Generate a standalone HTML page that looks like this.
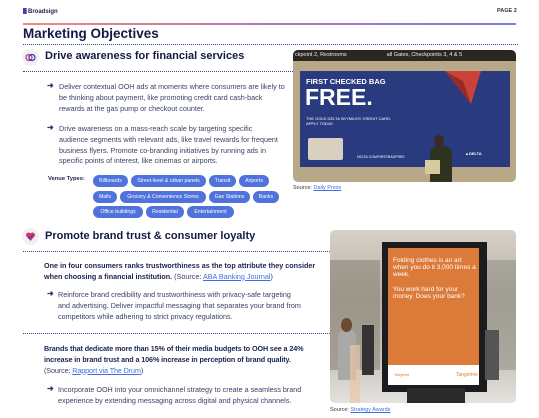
<!DOCTYPE html>
<html><head><meta charset="utf-8"><style>
*{margin:0;padding:0;box-sizing:border-box}
body{width:539px;height:418px;background:#fff;font-family:"Liberation Sans",sans-serif;color:#2b3060;position:relative;overflow:hidden}
.a{position:absolute}
.dot{position:absolute;height:0;border-top:1px dotted #3a4380}
.h{font-weight:bold;color:#141a45}
.t{font-size:7.2px;line-height:10.8px;color:#3a3f66}
.arr{position:absolute;font-size:8px;color:#2a3370;font-weight:bold}
.chip{position:absolute;height:12px;border-radius:6px;background:#4f72dc;color:#fff;font-size:5.2px;line-height:12px;text-align:center}
a{color:#3d6fe0;text-decoration:underline}
.ic{position:absolute;width:17px;height:17px;border-radius:50%;background:#f1f0f4}
</style></head><body>
<div class="a" style="left:23px;top:8px;font-size:6px;font-weight:bold;color:#1a2352"><span style="display:inline-block;width:4px;height:6px;background:#3b3fc9;border-right:1px solid #e85b6a;vertical-align:-1px;margin-right:1px"></span>Broadsign</div>
<div class="a" style="left:497px;top:8px;font-size:5.5px;font-weight:bold;color:#333">PAGE 2</div>
<div class="a" style="left:23px;top:23px;width:493px;height:2px;background:linear-gradient(90deg,#f08a7e,#b07ab0,#7a7fd8)"></div>
<div class="a h" style="left:23px;top:26px;font-size:13.5px">Marketing Objectives</div>
<div class="dot" style="left:23px;top:44px;width:495px"></div>
<div class="ic" style="left:22px;top:49px"><svg width="17" height="17"><circle cx="7" cy="8.5" r="3" fill="none" stroke="#d33a5e" stroke-width="1.3"/><circle cx="10" cy="8.5" r="3" fill="none" stroke="#3b3fc9" stroke-width="1.3"/></svg></div>
<div class="a h" style="left:45px;top:50px;font-size:11px">Drive awareness for financial services</div>
<div class="dot" style="left:23px;top:71px;width:270px"></div>
<div class="arr" style="left:47px;top:81px">➜</div>
<div class="a t" style="left:59px;top:82px;width:226px">Deliver contextual OOH ads at moments where consumers are likely to be thinking about payment, like promoting credit card cash-back rewards at the gas pump or checkout counter.</div>
<div class="arr" style="left:47px;top:123px">➜</div>
<div class="a t" style="left:59px;top:124px;width:222px">Drive awareness on a mass-reach scale by targeting specific audience segments with relevant ads, like travel rewards for frequent business flyers. Promote co-branding initiatives by running ads in specific points of interest, like cinemas or airports.</div>
<div class="a" style="left:48px;top:176px;font-size:5.8px;font-weight:bold;color:#1a2352">Venue Types:</div>
<div class="chip" style="left:93px;top:175px;width:35px">Billboards</div>
<div class="chip" style="left:131px;top:175px;width:75px">Street-level &amp; urban panels</div>
<div class="chip" style="left:209px;top:175px;width:27px">Transit</div>
<div class="chip" style="left:239px;top:175px;width:30px">Airports</div>
<div class="chip" style="left:93px;top:191px;width:24px">Malls</div>
<div class="chip" style="left:120px;top:191px;width:86px">Grocery &amp; Convenience Stores</div>
<div class="chip" style="left:209px;top:191px;width:41px">Gas Stations</div>
<div class="chip" style="left:253px;top:191px;width:26px">Banks</div>
<div class="chip" style="left:93px;top:206px;width:50px">Office buildings</div>
<div class="chip" style="left:146px;top:206px;width:38px">Residential</div>
<div class="chip" style="left:187px;top:206px;width:47px">Entertainment</div>
<div class="ic" style="left:22px;top:228px"><svg width="17" height="17"><path d="M8.5 13 L4.5 8.5 A2.3 2.3 0 0 1 8.5 5.5 A2.3 2.3 0 0 1 12.5 8.5Z" fill="#d33a5e"/><path d="M6 8.5 L8 10.5 L11 7" fill="none" stroke="#3b3fc9" stroke-width="1.2"/></svg></div>
<div class="a h" style="left:45px;top:230px;font-size:11px">Promote brand trust &amp; consumer loyalty</div>
<div class="dot" style="left:23px;top:251px;width:307px"></div>
<div class="a t" style="left:44px;top:261px;width:275px"><b style="color:#1a2352">One in four consumers ranks trustworthiness as the top attribute they consider when choosing a financial institution.</b> (Source: <a>ABA Banking Journal</a>)</div>
<div class="arr" style="left:47px;top:289px">➜</div>
<div class="a t" style="left:58px;top:290px;width:245px">Reinforce brand credibility and trustworthiness with privacy-safe targeting and advertising. Deliver impactful messaging that separates your brand from competitors while adhering to strict privacy regulations.</div>
<div class="dot" style="left:23px;top:333px;width:307px"></div>
<div class="a t" style="left:44px;top:344px;white-space:nowrap;letter-spacing:-0.1px"><b style="color:#1a2352">Brands that dedicate more than 15% of their media budgets to OOH see a 24%<br>increase in brand trust and a 106% increase in perception of brand quality.</b><br>(Source: <a>Rapport via The Drum</a>)</div>
<div class="arr" style="left:47px;top:384px">➜</div>
<div class="a t" style="left:58px;top:385px;width:260px">Incorporate OOH into your omnichannel strategy to create a seamless brand experience by extending messaging across digital and physical channels.</div>

<!-- image 1 -->
<div class="a" style="left:293px;top:50px;width:223px;height:132px;border-radius:5px;overflow:hidden;background:#b8a888">
 <div class="a" style="left:0;top:0;width:223px;height:11px;background:#2a2622;color:#eee;font-size:5.5px;line-height:11px;padding-left:2px;white-space:nowrap">ckpoint 2, Restrooms<span style="margin-left:40px">all Gates, Checkpoints 3, 4 &amp; 5</span></div>
 <div class="a" style="left:7px;top:21px;width:210px;height:96px;background:#2a3a7e"></div>
 <svg class="a" style="left:150px;top:21px" width="40" height="35"><path d="M2 0 L38 0 L28 33Z" fill="#c9433a"/><path d="M2 0 L20 10 L28 33Z" fill="#9a2a25"/></svg>
 <div class="a" style="left:13px;top:27px;color:#fff;font-weight:bold;font-size:7.5px">FIRST CHECKED BAG</div>
 <div class="a" style="left:12px;top:34px;color:#fff;font-weight:bold;font-size:23px">FREE.</div>
 <div class="a" style="left:13px;top:66px;color:#fff;font-size:4px;line-height:5px">THE GOLD DELTA SKYMILES' CREDIT CARD.<br>APPLY TODAY.</div>
 <div class="a" style="left:15px;top:88px;width:35px;height:22px;background:#d8d0c0;border-radius:2px"></div>
 <div class="a" style="left:64px;top:105px;color:#fff;font-size:3.5px">DELTA.COM/FIRSTBAGFREE</div>
 <div class="a" style="left:172px;top:101px;color:#fff;font-size:4px;font-weight:bold">▲DELTA</div>
 <div class="a" style="left:130px;top:120px;width:63px;height:12px;background:#b8a888"></div>
 <div class="a" style="left:137px;top:96px;width:22px;height:36px;background:#2e3320;border-radius:8px 8px 0 0"></div>
 <div class="a" style="left:141px;top:85px;width:10px;height:12px;background:#3a2a22;border-radius:50%"></div>
 <div class="a" style="left:132px;top:110px;width:15px;height:14px;background:#d8c9a0"></div>
</div>
<div class="a" style="left:293px;top:185px;font-size:5.5px;color:#333">Source: <a>Daily Press</a></div>

<!-- image 2 -->
<div class="a" style="left:330px;top:230px;width:186px;height:173px;border-radius:5px;overflow:hidden;background:linear-gradient(180deg,#d6d0c8 0%,#b8b0a4 40%,#c8c4bc 75%,#e4e2de 100%)">
 <div class="a" style="left:0;top:30px;width:50px;height:110px;background:#8a8478;opacity:.6"></div>
 <div class="a" style="left:140px;top:30px;width:46px;height:110px;background:#8a8a80;opacity:.5"></div>
 <div class="a" style="left:52px;top:12px;width:105px;height:150px;background:#1c1c1e"></div>
 <div class="a" style="left:58px;top:18px;width:91px;height:117px;background:#dc7a3a"></div>
 <div class="a" style="left:58px;top:135px;width:91px;height:20px;background:#fff"></div>
 <div class="a" style="left:63px;top:27px;color:#fff;font-size:6.5px;line-height:7.2px;width:84px">Folding clothes is an art when you do it 3,000 times a week.<br><br>You work hard for your money. Does your bank?</div>
 <div class="a" style="left:64px;top:143px;color:#dc7a3a;font-size:3.5px">Tangerine</div>
 <div class="a" style="left:126px;top:142px;color:#dc7a3a;font-size:5px">Tangerine</div>
 <div class="a" style="left:77px;top:158px;width:58px;height:15px;background:#2a2a2a"></div>
 <div class="a" style="left:8px;top:100px;width:18px;height:50px;background:#a9aaa8;border-radius:6px 6px 0 0"></div>
 <div class="a" style="left:11px;top:88px;width:11px;height:14px;background:#6a4a30;border-radius:50%"></div>
 <div class="a" style="left:20px;top:115px;width:10px;height:58px;background:#e8c6a8;opacity:.7"></div>
 <div class="a" style="left:32px;top:95px;width:12px;height:50px;background:#333"></div>
 <div class="a" style="left:155px;top:100px;width:14px;height:50px;background:#555"></div>
</div>
<div class="a" style="left:330px;top:407px;font-size:5.5px;color:#333">Source: <a>Strategy Awards</a></div>
</body></html>
